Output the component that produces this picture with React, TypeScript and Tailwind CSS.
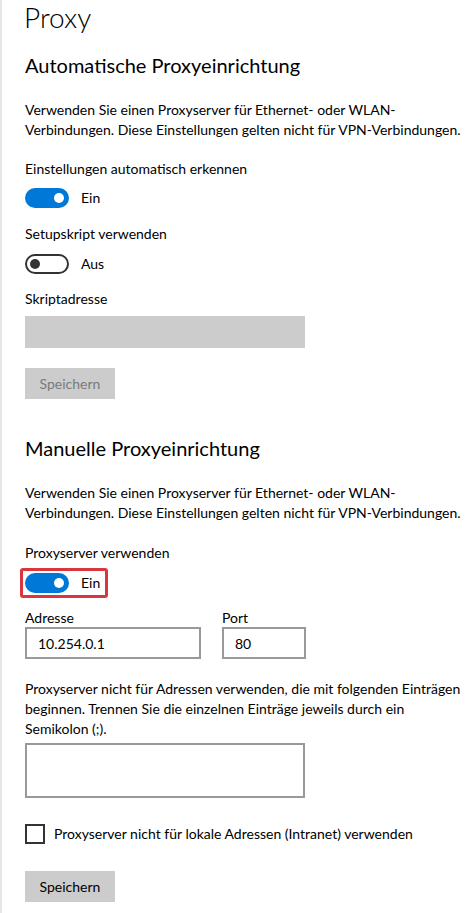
import React from 'react';

function Toggle({ on }: { on: boolean }) {
  return (
    <div className="flex items-center h-5">
      {on ? (
        <div className="w-[44px] h-5 rounded-full bg-[#0078d7] flex items-center justify-end pr-[5px]">
          <div className="w-[10px] h-[10px] rounded-full bg-white" />
        </div>
      ) : (
        <div className="w-[44px] h-5 rounded-full border-2 border-[#333333] flex items-center pl-[3px]">
          <div className="w-[10px] h-[10px] rounded-full bg-[#333333]" />
        </div>
      )}
      <span className="ml-3 leading-5">{on ? 'Ein' : 'Aus'}</span>
    </div>
  );
}

export default function App() {
  return (
    <div
      className="min-h-screen bg-white border-l-2 border-[#e6e6e6] pl-[23px] text-black text-[14px]"
      style={{ fontFamily: 'Lato, "Noto Sans", sans-serif' }}
    >
      <h1 className="text-[28px] font-light leading-[34px] -ml-px">Proxy</h1>

      <h2 className="mt-[17px] text-[20px] leading-7">Automatische Proxyeinrichtung</h2>
      <p className="mt-[21px] leading-5">
        Verwenden Sie einen Proxyserver für Ethernet- oder WLAN-
        <br />
        Verbindungen. Diese Einstellungen gelten nicht für VPN-Verbindungen.
      </p>

      <div className="mt-[19px] leading-5">Einstellungen automatisch erkennen</div>
      <div className="mt-[9px]">
        <Toggle on />
      </div>

      <div className="mt-4 leading-5">Setupskript verwenden</div>
      <div className="mt-[10px]">
        <Toggle on={false} />
      </div>

      <div className="mt-[15px] leading-5">Skriptadresse</div>
      <div className="mt-[7px] w-[280px] h-8 bg-[#cccccc]" />

      <button className="mt-5 block w-[90px] h-[31px] bg-[#cccccc] text-[#7a7a7a] leading-5">
        Speichern
      </button>

      <h2 className="mt-[35px] text-[20px] leading-7">Manuelle Proxyeinrichtung</h2>
      <p className="mt-[21px] leading-5">
        Verwenden Sie einen Proxyserver für Ethernet- oder WLAN-
        <br />
        Verbindungen. Diese Einstellungen gelten nicht für VPN-Verbindungen.
      </p>

      <div className="mt-5 leading-5">Proxyserver verwenden</div>
      <div className="mt-[10px] relative w-fit">
        <Toggle on />
        <span className="absolute -left-[5px] -top-[5px] w-[88px] h-[30px] border-[3px] border-[#d9363e] rounded-[3px]" />
      </div>

      <div className="mt-[15px] flex gap-[21px]">
        <div>
          <div className="leading-[19px]">Adresse</div>
          <div className="w-[176px] h-8 border-2 border-[#999999] pl-[11px] flex items-center">10.254.0.1</div>
        </div>
        <div>
          <div className="leading-[19px]">Port</div>
          <div className="w-[84px] h-8 border-2 border-[#999999] pl-[11px] flex items-center">80</div>
        </div>
      </div>

      <p className="mt-5 leading-5">
        Proxyserver nicht für Adressen verwenden, die mit folgenden Einträgen
        <br />
        beginnen. Trennen Sie die einzelnen Einträge jeweils durch ein
        <br />
        Semikolon (;).
      </p>
      <div className="mt-1 w-[280px] h-[55px] border-2 border-[#999999]" />

      <div className="mt-[26px] flex items-center">
        <div className="w-5 h-5 border-2 border-[#333333]" />
        <span className="ml-[9px] leading-5">Proxyserver nicht für lokale Adressen (Intranet) verwenden</span>
      </div>

      <button className="mt-[27px] block w-[90px] h-[31px] bg-[#cccccc] text-black leading-5">
        Speichern
      </button>
    </div>
  );
}
